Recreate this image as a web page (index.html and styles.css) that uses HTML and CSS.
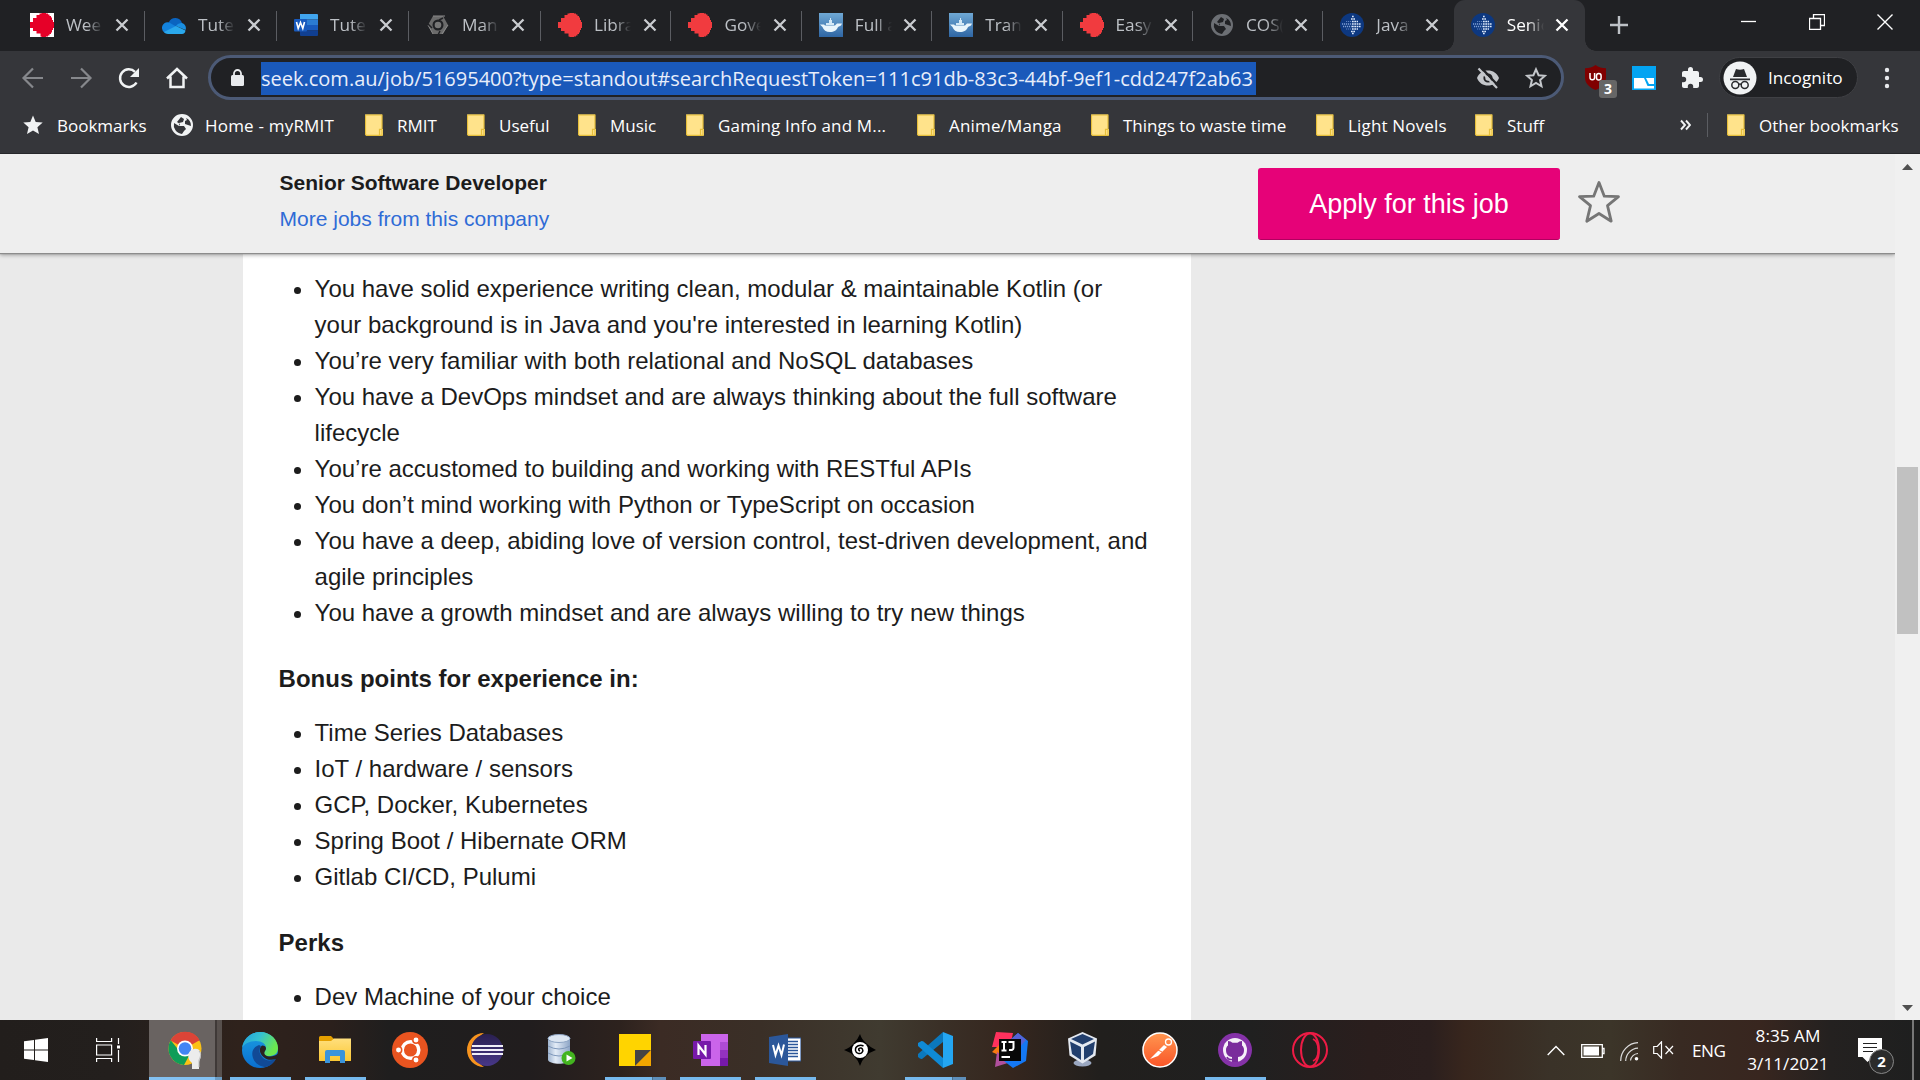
FILE: index.html
```html
<!DOCTYPE html>
<html lang="en">
<head>
<meta charset="utf-8">
<title>Senior Software Developer</title>
<link rel="stylesheet" href="styles.css">
</head>
<body>
<svg class="defs" width="0" height="0" aria-hidden="true">
  <defs>
    <linearGradient id="sea" x1="0" y1="0" x2="0" y2="1"><stop offset="0" stop-color="#6fa8d4"/><stop offset="1" stop-color="#2f66a4"/></linearGradient>
    <linearGradient id="edgeTop" x1="0" y1="0" x2="1" y2="0.4"><stop offset="0" stop-color="#1f9fe0"/><stop offset=".5" stop-color="#35c1d0"/><stop offset="1" stop-color="#6be84f"/></linearGradient>
    <linearGradient id="edgeLow" x1="0" y1="0" x2="0" y2="1"><stop offset="0" stop-color="#1b9de2"/><stop offset="1" stop-color="#0a6fd0"/></linearGradient>
    <linearGradient id="folderFace" x1="0" y1="0" x2="0" y2="1"><stop offset="0" stop-color="#ffdf7d"/><stop offset="1" stop-color="#fbc834"/></linearGradient>
    <linearGradient id="drum" x1="0" y1="0" x2="1" y2="0"><stop offset="0" stop-color="#9fb4cf"/><stop offset=".35" stop-color="#e3ecf7"/><stop offset="1" stop-color="#8da5c6"/></linearGradient>
    <linearGradient id="postman" x1="0" y1="0" x2="0" y2="1"><stop offset="0" stop-color="#ff9650"/><stop offset="1" stop-color="#fa5528"/></linearGradient>
    <linearGradient id="eclipse" x1="0" y1="0" x2="0" y2="1"><stop offset="0" stop-color="#2a2050"/><stop offset="1" stop-color="#473788"/></linearGradient>
  </defs>
  <symbol id="x" viewBox="0 0 14 14"><path d="M1.500 1.500 12.500 12.500M12.500 1.500 1.500 12.500" stroke="currentColor" stroke-width="2.300" fill="none"/></symbol>
  <symbol id="rmit" viewBox="0 0 24 24"><path d="M9.500 2V0.500h2V0H16v.5h2v1h1.500V3H21v1.500h1V7h1v2h1v6h-1v2h-1v2.500h-1V21h-1.500v1.500H18v1h-2v.5h-4.500v-.5h-1V20.500H6.500V18H3v-3H0V9h3V5h3.500V2z"/></symbol>
  <symbol id="cloud" viewBox="0 0 24 17"><path d="M7 5a7 7 0 0 1 13 1L9 12 3 9Z" fill="#0a64c0"/><path d="M0 11.500a5.500 5.500 0 0 1 8-5.500l7 4-12 6a5.500 5.500 0 0 1-3-4.500" fill="#1382dc"/><path d="M14 9c2-3 5-3 6-3a5.200 5.200 0 0 1 3.500 7" fill="#1a8fe2"/><path d="m2 15 12-6 9.500 4.500A4 4 0 0 1 20 17H6c-2 0-3-.8-4-2" fill="#2aa8ec"/></symbol>
  <symbol id="wordtab" viewBox="0 0 24 22"><path d="M6 0h17a1 1 0 0 1 1 1v4.500H6z" fill="#41a5ee"/><path d="M6 5.500h18V11H6z" fill="#2b7cd3"/><path d="M6 11h18v5.500H6z" fill="#185abd"/><path d="M6 16.500h18V21a1 1 0 0 1-1 1H7a1 1 0 0 1-1-1z" fill="#103f91"/><rect y="5" width="13" height="12.500" rx="1" fill="#185abd"/><path d="m2.500 8 1.700 6.500L6.500 8.500l2.300 6L10.500 8" stroke="#fff" stroke-width="1.600" fill="none"/></symbol>
  <symbol id="hex" viewBox="0 0 22 22"><path d="M6 2h10l5 9-5 9H6L1 11z" fill="#6b6b6b"/><path d="M6 2h12M21 11l-6 9M1 11l5 9" stroke="#8a8a8a"/><circle cx="11" cy="11" r="5.500" fill="#202124"/><circle cx="11" cy="11" r="3.300" fill="#777"/><path d="M5 14 0 9M16 4l-4 2M13 17l-2 4" stroke="#202124" stroke-width="1.500"/></symbol>
  <symbol id="ship" viewBox="0 0 24 24"><path d="M0 0h24v24H0z" fill="url(#sea)"/><path d="M1 11.500h4l1 1h10l2-2h5l-1 2-3 1.500c-1 3-4 5-8 5s-6.500-2-7.500-5z" fill="#e9f5fc"/><path d="M7 10h8v2H7zM10 7h3v3h-3zM11 5h1v2h-1z" fill="#d4e9f6"/></symbol>
  <symbol id="globe" viewBox="0 0 24 24"><path d="M12 1a11 11 0 1 0 0 22 11 11 0 0 0 0-22M11 4l3 2-1 3-4 1v3h5l2 3-2 2-2 3a9 9 0 0 1-8-11l5 3 1-2-3-2zM16 5a8.500 8.500 0 0 1 5 8l-3-1-3-1v-3l2-1z" fill="currentColor" fill-rule="evenodd"/></symbol>
  <symbol id="seek" viewBox="0 0 24 24"><circle cx="12" cy="12" r="12" fill="#0d3880"/><path d="M2 11h10M3 13.500h9" stroke="#7f9fd4" stroke-width="1.400" stroke-dasharray="1.200 .8"/><path d="M6 8.500h6M6 16h6" stroke="#5f82bf" stroke-width="1.200" stroke-dasharray="1.200 .8"/><path d="M12 3.500h2M11 6h4M12 8.500h6M12 11h9M12 13.500h9M12 16h6M11 18.500h4M12 20.500h2" stroke="#dce8fa" stroke-width="1.700" stroke-dasharray="1.700 .6"/></symbol>
  <symbol id="folder" viewBox="0 0 18 22"><path d="M0 .5h17v14.500h1v6.500H1L0 20z" fill="#ffe38b"/><path d="M.5 1h16.500v14M.5 1v19.500l1 .8h15.500v-6h-2.500v5.500" fill="none" stroke="#e6bf3b" stroke-width="1.200"/></symbol>
</svg>

<header class="chrome">
  <div class="tabstrip">
    <div class="tab"><svg class="fav"><path d="M0 0h24v24H0z" fill="#fff"/><use href="#rmit" fill="#e60028"/></svg><span class="label">Wee</span><svg class="close"><use href="#x"/></svg></div>
    <div class="tab"><svg class="fav" viewBox="0 0 24 24"><use href="#cloud" y="4" width="24" height="17"/></svg><span class="label">Tute</span><svg class="close"><use href="#x"/></svg></div>
    <div class="tab"><svg class="fav" viewBox="0 0 24 24"><use href="#wordtab" y="1" width="24" height="22"/></svg><span class="label">Tute</span><svg class="close"><use href="#x"/></svg></div>
    <div class="tab"><svg class="fav" viewBox="0 0 24 24"><use href="#hex" x="1" y="1" width="22" height="22"/></svg><span class="label">Man:</span><svg class="close"><use href="#x"/></svg></div>
    <div class="tab"><svg class="fav"><use href="#rmit" fill="#f13b3f"/></svg><span class="label">Libra</span><svg class="close"><use href="#x"/></svg></div>
    <div class="tab"><svg class="fav"><use href="#rmit" fill="#f13b3f"/></svg><span class="label">Gove</span><svg class="close"><use href="#x"/></svg></div>
    <div class="tab"><svg class="fav"><use href="#ship"/></svg><span class="label">Full a</span><svg class="close"><use href="#x"/></svg></div>
    <div class="tab"><svg class="fav"><use href="#ship"/></svg><span class="label">Trans</span><svg class="close"><use href="#x"/></svg></div>
    <div class="tab"><svg class="fav"><use href="#rmit" fill="#f13b3f"/></svg><span class="label">Easy</span><svg class="close"><use href="#x"/></svg></div>
    <div class="tab"><svg class="fav dim"><use href="#globe"/></svg><span class="label">COS(</span><svg class="close"><use href="#x"/></svg></div>
    <div class="tab last"><svg class="fav"><use href="#seek"/></svg><span class="label">Java</span><svg class="close"><use href="#x"/></svg></div>
    <div class="tab active"><svg class="fav"><use href="#seek"/></svg><span class="label">Senio</span><svg class="close"><use href="#x"/></svg></div>
    <svg class="plus" width="18" height="18"><path d="M9 0v18M0 9h18" stroke="#bdc1c6" stroke-width="2.400"/></svg>
    <div class="wincontrols">
      <svg width="16" height="16"><path d="M0 7.500h15" stroke="#fff" stroke-width="1.300"/></svg>
      <svg width="16" height="16"><path d="M.5 4.500h11v11H.5zM4.500 4V.5h11v11H12" fill="none" stroke="#fff" stroke-width="1.300"/></svg>
      <svg width="16" height="16"><path d="m.5.5 15 15m0-15-15 15" stroke="#fff" stroke-width="1.400"/></svg>
    </div>
  </div>

  <div class="toolbar">
    <div class="nav">
      <svg width="24" height="24" class="off"><path d="M22 12H3M12 2.500 2.500 12l9.500 9.500" fill="none" stroke="currentColor" stroke-width="2.200"/></svg>
      <svg width="24" height="24" class="off"><path d="M2 12h19M12 2.500l9.500 9.500-9.500 9.500" fill="none" stroke="currentColor" stroke-width="2.200"/></svg>
      <svg width="24" height="24"><path d="M19.500 16.500a8.800 8.800 0 1 1-1.500-10.700" fill="none" stroke="currentColor" stroke-width="2.500"/><path d="M22 2v9h-9z" fill="currentColor"/></svg>
      <svg width="24" height="24"><path d="M2 12.500 12 3l10 9.500M5.500 10.500V21h13V10.500" fill="none" stroke="currentColor" stroke-width="2.500"/></svg>
    </div>
    <div class="omnibox">
      <svg class="lock" width="13" height="18"><rect y="6" width="13" height="11" rx="1.500" fill="#e8eaed"/><path d="M3 7V4.500a3.500 3.500 0 0 1 7 0V7" fill="none" stroke="#e8eaed" stroke-width="1.800"/></svg>
      <span class="url">seek.com.au/job/51695400?type=standout#searchRequestToken=111c91db-83c3-44bf-9ef1-cdd247f2ab63</span>
      <svg class="eye" width="24" height="24" viewBox="0 0 24 24"><path d="M1 12C3 7 7 4.500 12 4.500S21 7 23 12c-2 5-6 7.500-11 7.500S3 17 1 12m11-4.600a4.600 4.600 0 1 0 0 9.200 4.600 4.600 0 0 0 0-9.200" fill="#c4c7cb" fill-rule="evenodd"/><circle cx="12" cy="12" r="2.700" fill="#c4c7cb"/><path d="M4.500 1 23 20.500" stroke="#202124" stroke-width="2.500"/><path d="M2.500 2.500 21 22" stroke="#c4c7cb" stroke-width="2.200"/></svg>
      <svg class="bmstar" width="22" height="22" viewBox="0 0 22 22"><path d="m11 2.300 2.600 5.900 6.300.6-4.800 4.200 1.400 6.300L11 16l-5.500 3.300L6.900 13 2.100 8.800l6.300-.6z" fill="none" stroke="#c4c7cb" stroke-width="2"/></svg>
    </div>
    <div class="exts">
      <div class="ublock"><svg width="23" height="25" viewBox="0 0 23 25"><path d="M11.500 0c3 2.300 6.500 3 10.500 3.300v9c0 6-4 10-10.500 12.700C5 22.300 1 18.300 1 12.300v-9C5 3 8.500 2.300 11.500 0" fill="#800000"/><path d="M6 8v4.500a2.300 2.300 0 0 0 4.600 0V8M12.500 12.800a2.300 2.300 0 1 0 4.600 0v-2a2.300 2.300 0 0 0-4.600 0z" fill="none" stroke="#fff" stroke-width="1.500"/></svg><b class="count">3</b></div>
      <svg class="tabby" width="24" height="24"><path d="M0 0h24v24H0z" fill="#03a4f2"/><path d="M2 12h10l3.500 8H22v2.500H2z" fill="#fff"/><path d="M14 12h8v6h-5z" fill="#fff"/></svg>
      <svg class="puzzle" width="24" height="24" viewBox="0 0 24 24"><path d="M20.500 11H19V7c0-1.100-.9-2-2-2h-4V3.500a2.500 2.500 0 0 0-5 0V5H4c-1.100 0-2 .9-2 2v3.800h1.500a2.700 2.700 0 0 1 0 5.400H2V20c0 1.100.9 2 2 2h3.800v-1.500a2.700 2.700 0 0 1 5.400 0V22H17c1.100 0 2-.9 2-2v-4h1.500a2.500 2.500 0 0 0 0-5" fill="#f1f3f4"/></svg>
      <div class="incog"><svg width="34" height="34" viewBox="0 0 34 34"><circle cx="17" cy="17" r="16.500" fill="#f1f3f4"/><path d="M7 17.500h20v1.700H7zM10 16l3-8q4 1.500 8 0l3 8z" fill="#2a2b2e"/><circle cx="12.300" cy="24" r="3.500" fill="none" stroke="#2a2b2e" stroke-width="1.500"/><circle cx="21.700" cy="24" r="3.500" fill="none" stroke="#2a2b2e" stroke-width="1.500"/><path d="M15.500 23.500q1.500-1 3 0" fill="none" stroke="#2a2b2e" stroke-width="1.300"/></svg><span>Incognito</span></div>
      <svg class="dots" width="6" height="22"><g fill="#e8eaed"><circle cx="3" cy="3" r="2.200"/><circle cx="3" cy="11" r="2.200"/><circle cx="3" cy="19" r="2.200"/></g></svg>
    </div>
  </div>

  <nav class="bookmarks">
    <a class="bm"><svg width="20" height="20" viewBox="0 0 20 20"><path d="m10 .5 2.700 6.500 7 .6-5.300 4.600 1.600 6.800-6-3.600-6 3.600 1.600-6.800L.3 7.600l7-.6z" fill="#f1f3f4"/></svg>Bookmarks</a>
    <a class="bm g"><svg width="24" height="24" class="bglobe"><use href="#globe"/></svg>Home - myRMIT</a>
    <a class="bm"><svg width="18" height="22"><use href="#folder"/></svg>RMIT</a>
    <a class="bm"><svg width="18" height="22"><use href="#folder"/></svg>Useful</a>
    <a class="bm"><svg width="18" height="22"><use href="#folder"/></svg>Music</a>
    <a class="bm wide"><svg width="18" height="22"><use href="#folder"/></svg>Gaming Info and M...</a>
    <a class="bm wide"><svg width="18" height="22"><use href="#folder"/></svg>Anime/Manga</a>
    <a class="bm"><svg width="18" height="22"><use href="#folder"/></svg>Things to waste time</a>
    <a class="bm wide"><svg width="18" height="22"><use href="#folder"/></svg>Light Novels</a>
    <a class="bm"><svg width="18" height="22"><use href="#folder"/></svg>Stuff</a>
    <svg class="more" width="11" height="12"><path d="m1 1.500 4 4.500-4 4.500M6 1.500l4 4.500-4 4.500" fill="none" stroke="#f1f3f4" stroke-width="1.900"/></svg>
    <a class="bm other"><svg width="18" height="22"><use href="#folder"/></svg>Other bookmarks</a>
  </nav>
</header>

<div class="viewport">
  <div class="page">
    <div class="sticky">
      <div class="job"><strong>Senior Software Developer</strong><a>More jobs from this company</a></div>
      <button class="apply">Apply for this job</button>
      <svg class="save" width="44" height="44" viewBox="0 0 44 44"><path d="m22 2.500 5.300 13.700 14.200.5-11 9 3.700 15.500L22 33.500 9.800 41.200l3.700-15.500-11-9 14.200-.5z" fill="none" stroke="#757575" stroke-width="2.800" stroke-linejoin="round"/></svg>
    </div>
    <main class="card">
      <ul>
        <li>You have solid experience writing clean, modular &amp; maintainable Kotlin (or<br>your background is in Java and you're interested in learning Kotlin)</li>
        <li>You’re very familiar with both relational and NoSQL databases</li>
        <li>You have a DevOps mindset and are always thinking about the full software<br>lifecycle</li>
        <li>You’re accustomed to building and working with RESTful APIs</li>
        <li>You don’t mind working with Python or TypeScript on occasion</li>
        <li>You have a deep, abiding love of version control, test-driven development, and<br>agile principles</li>
        <li>You have a growth mindset and are always willing to try new things</li>
      </ul>
      <h2>Bonus points for experience in:</h2>
      <ul>
        <li>Time Series Databases</li>
        <li>IoT / hardware / sensors</li>
        <li>GCP, Docker, Kubernetes</li>
        <li>Spring Boot / Hibernate ORM</li>
        <li>Gitlab CI/CD, Pulumi</li>
      </ul>
      <h2>Perks</h2>
      <ul><li>Dev Machine of your choice</li></ul>
    </main>
  </div>
  <div class="scrollbar">
    <svg width="11" height="6"><path d="M0 6 5.500 0 11 6z" fill="#505050"/></svg>
    <div class="thumb"></div>
    <svg width="11" height="6"><path d="M0 0h11L5.500 6z" fill="#505050"/></svg>
  </div>
</div>

<footer class="taskbar">
  <div class="sys start"><svg width="24" height="24"><path d="M0 3.200 10 2v9.500H0zM11 1.800 24 0v11.500H11zM0 12.500h10V22L0 20.800zM11 12.500h13V24l-13-1.800z" fill="#fff"/></svg></div>
  <div class="sys view"><svg width="25" height="24"><path d="M.6 0v3.500h15V0M.6 7h15v10H.6zM.6 24v-3.500h15V24M22.500 0v6M22.500 12v12" fill="none" stroke="#fff" stroke-width="1.200"/><path d="M21 7.500h3v3h-3z" fill="#fff"/></svg></div>
  <div class="app current"><svg width="36" height="38" viewBox="0 0 36 38"><circle cx="18" cy="17.500" r="16.500" fill="#fbc116"/><path d="M18 17.500 3.500 9.500a16.500 16.500 0 0 1 29-.3z" fill="#db4437"/><path d="M18 1a16.500 16.500 0 0 1 14.500 8.500H17z" fill="#db4437"/><path d="M3.700 9.200A16.500 16.500 0 0 0 17 34l6-11-9-1z" fill="#0f9d58"/><circle cx="18" cy="17.500" r="8" fill="#fff"/><circle cx="18" cy="17.500" r="6.300" fill="#4285f4"/><path d="M23 30c-3-4-2-11 4-12s8 4 6.500 9l-1.500 4 0 7h-7v-6z" fill="#ececec"/><path d="M32 20c3 3 1 7 0 9v7" stroke="#bbb" fill="none"/></svg></div>
  <div class="app open"><svg width="36" height="36" viewBox="0 0 36 36"><circle cx="18" cy="18" r="18" fill="url(#edgeLow)"/><path d="M0 16C2 5 10 0 18 0c11 0 18 8 18 16 0 6-4 8-9 8-4 0-5-2-5-3 0-2 2-2 2-5 0-4-4-7-10-7C7 9 2 12 0 16" fill="url(#edgeTop)"/><path d="M17 13c-6 2-8 7-6 13s8 9 13 9c4-1 8-4 10-8-5 2-10 2-13-1s-5-7-2-12z" fill="#114a96"/><path d="M20 13.500c4 0 5 3 3 5.500-2 3 1 5.500 5 5.500 3 0 6-1 8.500-3.500L34.500 27c-5 1.500-10 1-13-2-4-3-5-9-1.500-11.500" fill="#2a211f"/></svg></div>
  <div class="app open"><svg width="32" height="28"><path d="M0 1.500Q0 0 1.500 0H12l3 3h15.500Q32 3 32 4.500V25H0z" fill="#e5a000"/><path d="M0 5h12l3-2.500h17V24q0 1-1 1H1q-1 0-1-1z" fill="url(#folderFace)"/><path d="M6 27V16q0-2 2-2h16q2 0 2 2v11h-5v-7H11v7z" fill="#3a94dc"/></svg></div>
  <div class="app"><svg width="36" height="36"><circle cx="18" cy="18" r="18" fill="#e95420"/><circle cx="18.500" cy="18" r="8.300" fill="none" stroke="#fff" stroke-width="3.500"/><g fill="#fff" stroke="#e95420" stroke-width="1.500"><circle cx="6.500" cy="18" r="3.200"/><circle cx="24" cy="8" r="3.200"/><circle cx="24" cy="28" r="3.200"/></g></svg></div>
  <div class="app"><svg width="37" height="36"><path d="M17 1A17 17 0 0 0 17 35 20 20 0 0 1 17 1" fill="#f7941e"/><circle cx="20" cy="18" r="16" fill="url(#eclipse)"/><path d="M5 14h31M4.500 18h32M5 22h31" stroke="#f0eef8" stroke-width="2.200"/></svg></div>
  <div class="app db"><svg width="30" height="32" viewBox="0 0 30 32"><path d="M1 4v22c2 5 20 5 22 0V4z" fill="url(#drum)"/><ellipse cx="12" cy="4.500" rx="11" ry="4" fill="#dce6f2" stroke="#8ea5c4"/><path d="M1 12q11 6 22 0M1 19q11 6 22 0" fill="none" stroke="#7f98bb"/><circle cx="21.500" cy="24" r="7" fill="#43b41f"/><path d="m19.500 20.500 6 3.500-6 3.500z" fill="#fff"/></svg></div>
  <div class="app open split"><svg width="32" height="32"><path d="M0 0h32v16L16 32H0z" fill="#ffd400"/><path d="M16 16h16L16 32z" fill="#444"/><path d="M32 16v16H16z" fill="#f2a600"/></svg></div>
  <div class="app open"><svg width="35" height="32"><path d="M8 0h27v32H8z" fill="#ca64ea"/><path d="M27 8h8v8h-8z" fill="#ae4bd5"/><path d="M27 16h8v8h-8z" fill="#9332bf"/><path d="M27 24h8v8h-8z" fill="#7719aa"/><rect y="7" width="18" height="18" rx="1" fill="#7719aa"/><path d="M5.500 21v-9.500l7 9V11" fill="none" stroke="#fff" stroke-width="2.200"/></svg></div>
  <div class="app open"><svg width="32" height="32"><path d="M17 4h15v23H17z" fill="#fff" stroke="#2b579a" stroke-width="1.200"/><path d="M19 7.500h10M19 10.500h10M19 13.500h10M19 16.500h10M19 19.500h10M19 22.500h10" stroke="#2b579a" stroke-width="1.400"/><path d="M0 3 19 0v32L0 29z" fill="#2b579a"/><path d="m4 11 2.500 10 3-9.500 3 9.500L15 10.500" fill="none" stroke="#fff" stroke-width="2"/></svg></div>
  <div class="app"><svg width="32" height="32"><path d="M16 0q2 6 6 9 5 5 10 7-6 2-10 6t-6 10q-2-6-6-10T0 16q6-2 10-7 4-4 6-9" fill="#000"/><circle cx="16" cy="16" r="8" fill="#fff"/><path d="M16 17q-2-1-1-2.500c3-2 5 2 3 4s-6 1-6.500-2c-.5-5 5-6 8-4.500" fill="none" stroke="#000" stroke-width="1.500"/></svg></div>
  <div class="app open split"><svg width="36" height="36"><path d="M26 0v10L5 27q-1.500.5-4-2v-3z" fill="#0b78bd"/><path d="M26 36 1 14v-3L4.500 9q1-.3 2 .5L26 26z" fill="#0f8ad6"/><path d="m26 0 10 4v28l-10 4z" fill="#24a6f2"/></svg></div>
  <div class="app"><svg width="36" height="36"><path d="m4 0 17 1-3 14H0z" fill="#fe315d"/><path d="m0 20 7-7 4 12z" fill="#f97a12"/><path d="M5 20 3 35l16-5z" fill="#b0509d"/><path d="m18 8 8-7 10 8-2 20-13 7-9-7z" fill="#1478f5"/><path d="m18 8 8-7 8 7-7 8z" fill="#5562d6"/><path d="M7 7h22v22H7z" fill="#080808"/><path d="M9.500 10h5M12 10v8M9.500 18.500h5M16.500 10h5v6q0 2.500-4.500 2" fill="none" stroke="#fff" stroke-width="2"/><path d="M9.500 25h8.500" stroke="#fff" stroke-width="2"/></svg></div>
  <div class="app vbox"><svg width="31" height="36"><ellipse cx="15.500" cy="31" rx="9" ry="3.500" fill="#9aa7c0"/><path d="m15.500 0 14.500 6.500-1.500 17-13 8-13-8L1 6.500z" fill="#e4e9f1"/><path d="m15.500 2 11.500 5-11.500 5.500L4 7zM3 9.500l11 5.500v13L5 22zM28 9.500 17 15v13l9-6z" fill="#223f6e"/></svg></div>
  <div class="app"><svg width="36" height="36"><circle cx="18" cy="18" r="17" fill="url(#postman)" stroke="#fff" stroke-width="1.500"/><path d="m8 27 4-4 10-10 3 2-9 9-4 1.500z" fill="#fff"/><circle cx="26.500" cy="10" r="3" fill="none" stroke="#fff" stroke-width="1.300"/><path d="m16 18 4 2" stroke="#fa7038"/></svg></div>
  <div class="app open"><svg width="34" height="34"><circle cx="17" cy="17" r="17" fill="#8532a8"/><circle cx="17" cy="17" r="12" fill="#f5f0f8"/><path d="M14 29v-5c-3-.5-6-2-6-7 0-2 .7-3.500 2-4.500V8c2 0 3.500 1 4.500 1.700h5C20.500 9 22 8 24 8v4.500c1.300 1 2 2.500 2 4.500 0 5-3 6.500-6 7v5z" fill="#7a2c9c"/><path d="M14 26.500q-4 .5-5-2.500" fill="none" stroke="#7a2c9c" stroke-width="1.500"/></svg></div>
  <div class="app"><svg width="36" height="36"><circle cx="18" cy="18" r="17" fill="none" stroke="#ee1b45" stroke-width="2"/><ellipse cx="18" cy="18" rx="9" ry="16.500" fill="none" stroke="#ee1b45" stroke-width="2"/><path d="M21 7c7 3 7 19 0 22" fill="none" stroke="#ee1b45" stroke-width="1.800"/></svg></div>

  <div class="tray">
    <svg class="chev" width="18" height="11"><path d="m.7 10 8.300-8.500L17.300 10" fill="none" stroke="#fff" stroke-width="1.400"/></svg>
    <svg class="batt" width="24" height="14"><path d="M.7.700h20.600v12.600H.7zM21.500 4.500H23v5h-1.500" fill="none" stroke="#fff" stroke-width="1.300"/><path d="M2.500 2.500h15.500v9H2.500z" fill="#fff"/></svg>
    <svg class="wifi" width="19" height="19"><g fill="none" stroke="#ddd" stroke-width="1.200"><path d="M.7 19A18 18 0 0 1 18 .7M5.700 19A13 13 0 0 1 18 6.200M10.500 18.500A8 8 0 0 1 18 11.500"/></g><circle cx="16.500" cy="16.800" r="1.800" fill="#fff"/></svg>
    <svg class="vol" width="22" height="18"><path d="M.7 5.500h3.500L8.500.8v16.400L4.200 12.500H.7zM12.500 5l7.500 8M20 5l-7.500 8" fill="none" stroke="#fff" stroke-width="1.200"/></svg>
    <span class="lang">ENG</span>
    <div class="clock"><span>8:35 AM</span><span>3/11/2021</span></div>
    <div class="notif"><svg width="24" height="24"><path d="M0 0h24v19h-9.500L9.500 24 4.500 19H0z" fill="#fff"/><path d="M5 5.500h14M5 9.500h14M5 13.500h10" stroke="#222" stroke-width="1.200"/></svg><b class="ncount">2</b></div>
    <i class="peek"></i>
  </div>
</footer>
</body>
</html>
```

FILE: styles.css
```css
* { box-sizing: border-box; }
body {
  margin: 0;
  width: 1920px;
  height: 1080px;
  overflow: hidden;
  display: flex;
  flex-direction: column;
  font-family: "Open Sans", "Noto Sans", sans-serif;
  background: #eaeaea;
}
svg { display: block; flex: none; }
.defs { position: absolute; }

/* browser frame */
.chrome { flex: none; height: 154px; background: #35363a; border-bottom: 1px solid #26272a; }
.tabstrip { height: 51px; background: #202124; padding-left: 13px; display: flex; align-items: center; }
.tab {
  position: relative;
  flex: none;
  width: 130.4px;
  height: 51px;
  display: flex;
  align-items: center;
  padding: 0 0 2px 17px;
  color: #bdc1c6;
}
.tab:nth-child(-n+4) { width: 132px; }
.tab::after { content: ""; position: absolute; right: 0; top: 11px; width: 1px; height: 30px; background: #5b5d62; }
.tab.last::after, .tab.active::after { display: none; }
.fav { width: 24px; height: 24px; }
.fav.dim { color: #6c6f74; }
.label {
  width: 37px;
  margin-left: 12px;
  overflow: hidden;
  white-space: nowrap;
  font-size: 17.2px;
  line-height: 24px;
  -webkit-mask-image: linear-gradient(90deg, #000 55%, transparent 100%);
  mask-image: linear-gradient(90deg, #000 55%, transparent 100%);
}
.close { width: 14px; height: 14px; margin-left: 11.5px; color: #c9ccd0; }
.tab.active { background: #35363a; border-radius: 11px 11px 0 0; width: 131px; color: #fff; }
.tab.active .close { color: #fff; }
.tab.active::before {
  content: "";
  position: absolute;
  left: -11px;
  right: -11px;
  bottom: 0;
  height: 11px;
  background:
    radial-gradient(circle at 0 0, transparent 10.5px, #35363a 11px) left / 11px 11px no-repeat,
    radial-gradient(circle at 100% 0, transparent 10.5px, #35363a 11px) right / 11px 11px no-repeat;
}
.plus { margin: -1px 0 0 25px; }
.wincontrols { margin: -8px 27px 0 auto; display: flex; gap: 52px; }

.toolbar { height: 53px; display: flex; align-items: center; padding-left: 21px; }
.nav { display: flex; gap: 24px; color: #f1f3f4; width: 187px; }
.nav .off { color: #86888c; }
.omnibox {
  width: 1356px;
  height: 45px;
  border: 3px solid #4c5a76;
  border-radius: 23px;
  background: #202124;
  display: flex;
  align-items: center;
  padding-left: 20px;
}
.lock { margin-top: 1px; }
.url {
  margin: 2px 0 0 17px;
  width: 995px;
  height: 33px;
  background: #1a59ba;
  color: #e8eefa;
  font-size: 20px;
  line-height: 33px;
  white-space: nowrap;
}
.eye { margin: 1px 0 0 220px; }
.bmstar { margin: 1px 0 0 25px; }
.exts { display: flex; align-items: center; margin-left: 20px; }
.ublock { position: relative; }
.count {
  position: absolute;
  left: 15px;
  top: 15px;
  width: 18px;
  height: 18px;
  border-radius: 3px;
  background: #666;
  color: #fff;
  font-size: 14px;
  line-height: 18px;
  text-align: center;
}
.tabby { margin-left: 25px; }
.puzzle { margin-left: 24px; }
.incog {
  margin-left: 15px;
  width: 139px;
  height: 41px;
  border: 1px solid #3f4044;
  border-radius: 21px;
  background: #202124;
  display: flex;
  align-items: center;
  gap: 11px;
  padding-left: 3px;
  color: #fff;
  font-size: 17.2px;
}
.dots { margin-left: 26px; }

.bookmarks { height: 44px; display: flex; align-items: center; padding: 0 0 2px 23px; color: #fff; }
.bm {
  display: flex;
  align-items: center;
  gap: 14px;
  font-size: 17px;
  white-space: nowrap;
  flex: none;
}
.bm.g { gap: 11px; letter-spacing: .2px; }
.bm.wide { letter-spacing: .17px; }
.bm:nth-child(1) { width: 147px; }
.bm:nth-child(2) { width: 195px; }
.bm:nth-child(3) { width: 102px; }
.bm:nth-child(4) { width: 111px; }
.bm:nth-child(5) { width: 108px; }
.bm:nth-child(6) { width: 231px; }
.bm:nth-child(7) { width: 174px; }
.bm:nth-child(8) { width: 225px; }
.bm:nth-child(9) { width: 159px; }
.bglobe { color: #f1f3f4; }
.more { margin-left: auto; }
.bm.other { margin-left: 16px; width: 213px; border-left: 1px solid #5b5d62; height: 24px; padding-left: 19px; }

/* page */
.viewport { height: 866px; display: flex; font-family: "Liberation Sans", Arial, sans-serif; color: #1c1c1c; }
.page { width: 1895px; overflow: hidden; }
.sticky {
  position: relative;
  height: 99px;
  background: #eee;
  box-shadow: 0 1px 1px #8c8c8c, 0 2px 4px rgba(0, 0, 0, .35);
  display: flex;
  align-items: center;
  padding-left: 279.600px;
}
.job { width: 978.400px; display: flex; flex-direction: column; font-size: 21px; line-height: 36px; margin-top: -6px; }
.job a { color: #2f6bd6; }
.apply {
  width: 302px;
  height: 72px;
  border: 0;
  border-bottom: 1px solid #b10060;
  border-radius: 3px;
  background: #e60278;
  color: #fff;
  font: 27px/72px "Liberation Sans", Arial, sans-serif;
  padding: 0;
}
.save { margin: -4px 0 0 17px; }
.card { margin-left: 243px; width: 948px; height: 767px; padding: 18px 0 0 35.600px; background: #fff; font-size: 24px; line-height: 36px; }
.card ul { margin: 0; padding: 0; list-style: none; }
.card li { position: relative; padding-left: 36px; white-space: nowrap; }
.card li::before { content: ""; position: absolute; left: 15.400px; top: 16px; width: 7px; height: 7px; border-radius: 50%; background: #1c1c1c; }
.card h2 { margin: 30px 0 18px; font-size: 24px; line-height: 36px; }
.scrollbar { width: 25px; background: #f0f0f0; display: flex; flex-direction: column; padding: 10px 0 9px 7px; justify-content: space-between; }
.thumb { width: 21px; height: 167px; margin: 297px 0 auto -5px; background: #c1c1c1; }

/* taskbar */
.taskbar {
  height: 60px;
  display: flex;
  background: linear-gradient(90deg, #221e1c 0, #231f1d 110px, #2f221c 240px, #2b201c 330px, #1f1e1e 390px, #211d1e 530px, #2d221e 620px, #3b2b24 660px, #3a2f27 760px, #403b30 880px, #3a3027 940px, #35261e 1010px, #211f1d 1100px, #202020 1250px, #2a1e1d 1370px, #2b1f1e 1430px, #38261d 1465px, #3a3228 1550px, #3c3529 1610px, #382a22 1680px, #38261f 1760px, #242120 1830px, #1e1f1f 1920px);
}
.sys { display: flex; align-items: center; }
.start { width: 72px; padding-left: 24px; }
.view { width: 77px; padding-left: 24px; }
.app { position: relative; width: 75px; display: flex; align-items: center; justify-content: center; padding-right: 3px; }
.app.open::after { content: ""; position: absolute; left: 6px; width: 61px; bottom: 0; height: 3px; background: #76b9ed; }
.app.split::after { background: linear-gradient(90deg, #76b9ed 47px, #4d7089 47px, #4d7089 48px, #5e8fba 48px); }
.app.db { padding-right: 0; }
.app.vbox { padding-right: 8px; }
.current {
  background: linear-gradient(90deg, #696361 66px, #3f3937 66px, #3f3937 68px, #57504d 68px, #57504d 73px, transparent 73px);
}
.current svg { margin-left: -1px; }
.current::after { content: ""; position: absolute; left: 0; width: 73px; bottom: 0; height: 3px; background: linear-gradient(90deg, #83c1f2 66px, #6a9bc2 66px); }
.tray { margin-left: auto; display: flex; align-items: center; color: #fff; font-size: 17.2px; }
.chev { margin-right: 16px; }
.batt { margin: 1px 15px 0 0; }
.wifi { margin: 3px 14px 0 0; }
.vol { margin-right: 17px; }
.lang { width: 55px; letter-spacing: -.5px; }
.clock { width: 82px; display: flex; flex-direction: column; align-items: center; line-height: 28px; }
.notif { position: relative; margin-left: 29px; }
.ncount {
  position: absolute;
  left: 11px;
  top: 11px;
  width: 25px;
  height: 25px;
  border: 1px solid #888;
  border-radius: 50%;
  background: #2b2b2b;
  font-size: 15px;
  line-height: 23px;
  text-align: center;
}
.peek { width: 2px; height: 60px; margin: 0 6px 0 30px; background: #777; }
```
